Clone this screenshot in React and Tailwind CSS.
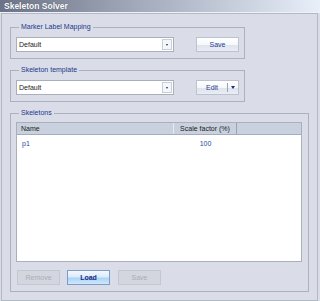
import React from 'react';

const font = { fontFamily: '"Liberation Sans", Arial, sans-serif' };

function Combo() {
    return (
        <div className="flex items-center w-[158px] h-[15px] bg-white border border-[#a9b0bc] pl-[2px] pr-[1px]">
            <span className="flex-1 text-[7px] leading-[13px] text-[#1c1c1c]">Default</span>
            <div className="flex items-center justify-center w-[10px] h-[11px] border border-[#c9ced8] bg-[#f4f6fa]">
                <div className="w-0 h-0 border-l-[1.5px] border-r-[1.5px] border-t-[2px] border-l-transparent border-r-transparent border-t-[#1e2c78]" />
            </div>
        </div>
    );
}

function Button({ children, disabled, active, className = '' }) {
    let look = 'border-[#bcc3ce] bg-[linear-gradient(#ffffff_0%,#f6f8fb_50%,#dde3ed_51%,#e9edf4_100%)] text-[#2a3a8c]';
    if (disabled) look = 'border-[#c3c7cf] bg-[#d3d6de] text-[#a9adb6]';
    if (active) look = 'border-[#7d9cc8] bg-[linear-gradient(#f2f8ff_0%,#dcebfb_45%,#a9d3f6_55%,#cfe8fc_100%)] text-[#1a2a80] font-bold';
    return (
        <div className={`flex items-center justify-center w-[43px] h-[15px] border text-[7px] leading-[13px] ${look} ${className}`}>
            {children}
        </div>
    );
}

function Group({ title, children, className = '' }) {
    return (
        <fieldset className={`border border-[#aab2be] ${className}`}>
            <legend className="ml-[3px] px-[2px] text-[7px] leading-[8px] text-[#23378c]">{title}</legend>
            {children}
        </fieldset>
    );
}

export default function App() {
    return (
        <div className="w-[320px] h-[301px] bg-[#dadde7] overflow-hidden" style={font}>
            {/* title bar */}
            <div className="h-[13px] flex items-center pl-[4px] bg-[linear-gradient(90deg,#6c7387_0%,#a4acbd_45%,#e8eff9_100%)] border-b border-[#eef2f8]">
                <span className="text-[8.5px] font-bold text-white leading-[12px] [text-shadow:0_0_1px_#404658]">Skeleton Solver</span>
            </div>

            <div className="ml-[1px] w-[317px] h-[288px] border border-[#b2b9c4] pl-[8px] pt-[9px] flex flex-col">
                <Group title="Marker Label Mapping" className="w-[235px] pl-[5px] pr-[5px] pt-[6px] pb-[6px]">
                    <div className="flex items-center">
                        <Combo />
                        <Button className="ml-[22px]">Save</Button>
                    </div>
                </Group>

                <Group title="Skeleton template" className="w-[235px] mt-[7px] pl-[5px] pr-[5px] pt-[6px] pb-[6px]">
                    <div className="flex items-center">
                        <Combo />
                        <div className="ml-[22px] flex w-[43px] h-[15px] border border-[#bcc3ce] bg-[linear-gradient(#ffffff_0%,#f6f8fb_50%,#dde3ed_51%,#e9edf4_100%)]">
                            <div className="flex-1 flex items-center justify-center text-[7px] leading-[13px] text-[#2a3a8c]">Edit</div>
                            <div className="w-[11px] flex items-center justify-center border-l border-[#9aa3b3] my-[2px]">
                                <div className="w-0 h-0 border-l-[2.5px] border-r-[2.5px] border-t-[3px] border-l-transparent border-r-transparent border-t-[#1e2c78]" />
                            </div>
                        </div>
                    </div>
                </Group>

                <Group title="Skeletons" className="w-[299px] mt-[7px] pl-[5px] pt-[5px] pb-[6px]">
                    <div className="w-[286px] h-[140px] bg-white border border-[#a9b0bc] flex flex-col">
                        <div className="flex h-[12px] bg-[#c9d1df] border-b border-[#a4adbd] text-[7px] leading-[11px] text-[#1c1c1c]">
                            <div className="w-[157px] pl-[4px] border-r border-[#e6eaf1]">Name</div>
                            <div className="w-[63px] text-center border-r border-[#98a2b3]">Scale factor (%)</div>
                            <div className="flex-1" />
                        </div>
                        <div className="flex h-[13px] mt-[2px] text-[7px] leading-[13px] text-[#2a3fa4]">
                            <div className="w-[157px] pl-[5px]">p1</div>
                            <div className="w-[63px] text-center">100</div>
                        </div>
                    </div>
                    <div className="flex mt-[8px] pl-[1px] gap-[7px]">
                        <Button disabled>Remove</Button>
                        <Button active>Load</Button>
                        <Button disabled className="ml-[1px]">Save</Button>
                    </div>
                </Group>
            </div>
        </div>
    );
}
